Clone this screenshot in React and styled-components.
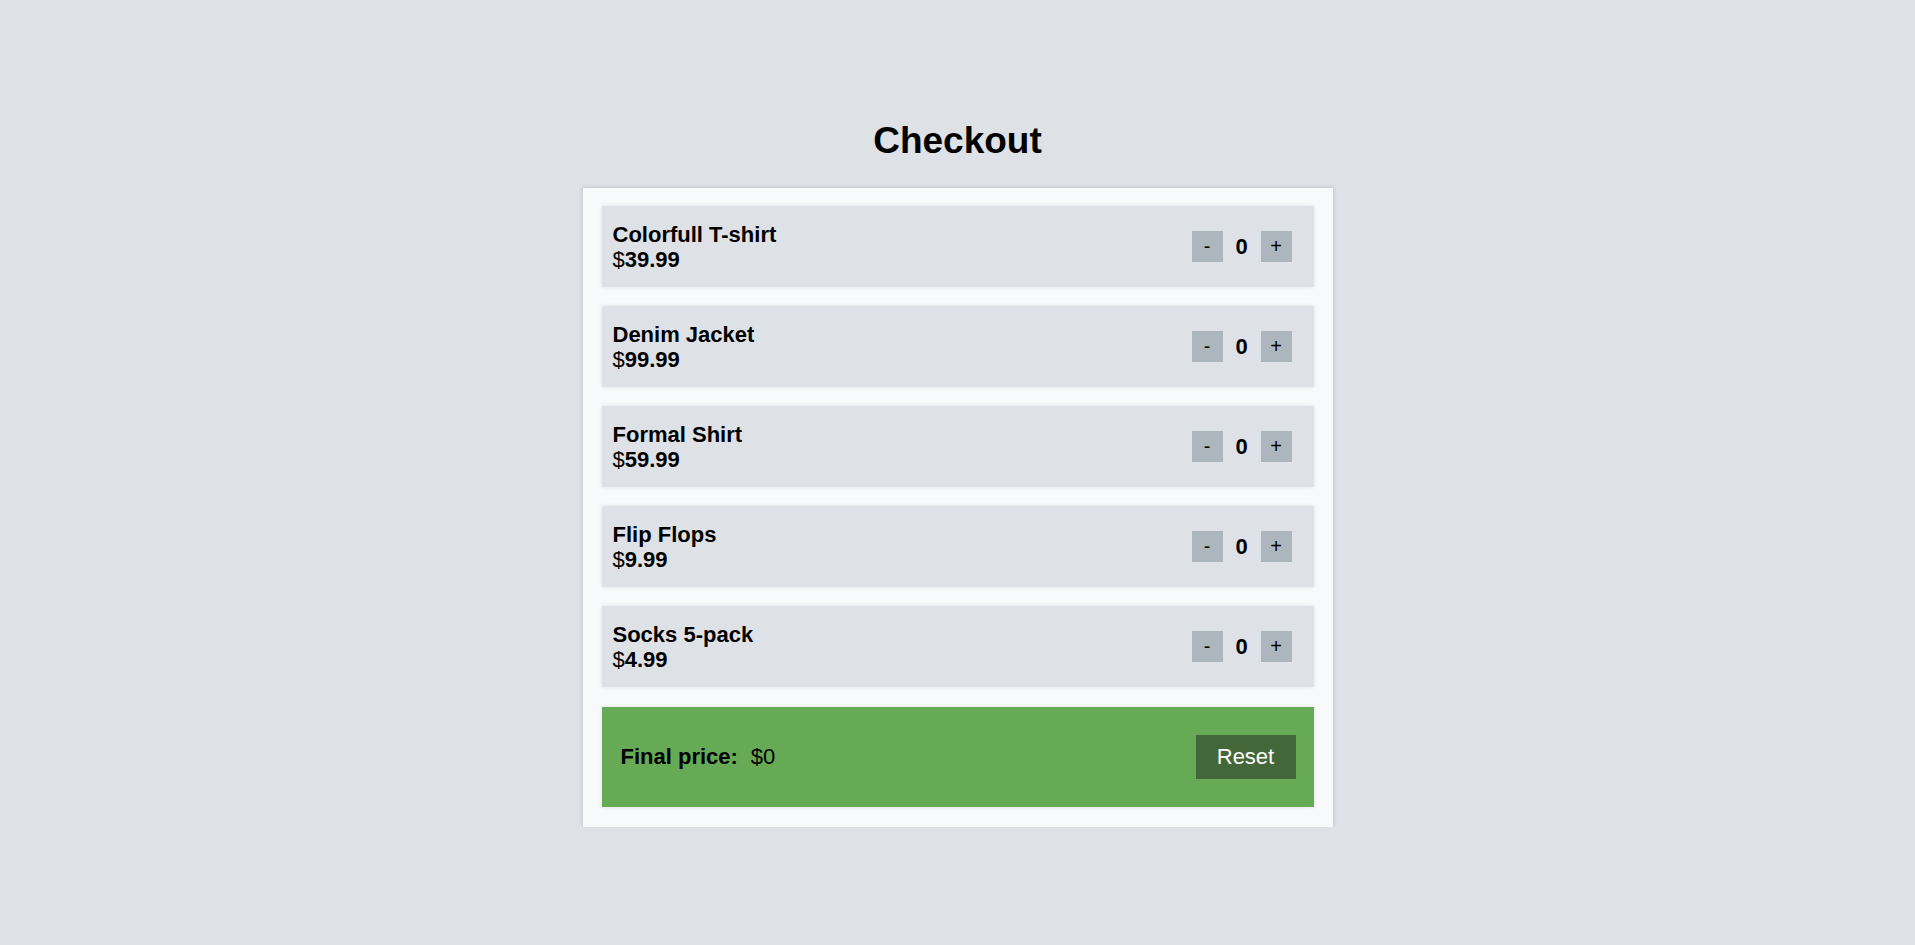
import React, { useState } from "react";
import styled, { createGlobalStyle } from "styled-components";

const GlobalStyle = createGlobalStyle`
  body {
    margin: 0;
    background: #dee2e6;
    font-family: "Liberation Sans", Arial, sans-serif;
    color: #000;
  }
`;

const products = [
  { id: 1, name: "Colorfull T-shirt", price: 39.99 },
  { id: 2, name: "Denim Jacket", price: 99.99 },
  { id: 3, name: "Formal Shirt", price: 59.99 },
  { id: 4, name: "Flip Flops", price: 9.99 },
  { id: 5, name: "Socks 5-pack", price: 4.99 },
];

const Page = styled.div`
  display: flex;
  flex-direction: column;
  align-items: center;
  padding-top: 120px;
`;

const Title = styled.h1`
  margin: 0 0 26px;
  font-size: 37px;
  font-weight: bold;
`;

const Card = styled.div`
  width: 750px;
  box-sizing: border-box;
  padding: 18px 19px 20px;
  background: #f8f9fa;
  box-shadow: 0 0 4px rgba(0, 0, 0, 0.2);
  display: flex;
  flex-direction: column;
  gap: 19px;
`;

const Row = styled.div`
  height: 81px;
  box-sizing: border-box;
  padding: 0 22px 0 11px;
  background: #dee2e6;
  box-shadow: 0 0 4px rgba(0, 0, 0, 0.1);
  display: flex;
  align-items: center;
  justify-content: space-between;
`;

const Info = styled.div`
  font-size: 22px;
  line-height: 25px;
`;

const Name = styled.div`
  font-weight: bold;
`;

const Price = styled.div`
  b {
    font-weight: bold;
  }
`;

const Counter = styled.div`
  display: flex;
  align-items: center;
`;

const StepButton = styled.button`
  width: 31px;
  height: 31px;
  padding: 0;
  border: none;
  background: #adb5bd;
  font-family: inherit;
  font-size: 20px;
  color: #000;
  cursor: pointer;
`;

const Count = styled.span`
  width: 38px;
  text-align: center;
  font-size: 22px;
  font-weight: bold;
`;

const Footer = styled.div`
  height: 100px;
  margin-top: 1px;
  box-sizing: border-box;
  padding: 0 18px 0 19px;
  background: #67aa55;
  box-shadow: 0 0 4px rgba(0, 0, 0, 0.1);
  display: flex;
  align-items: center;
  justify-content: space-between;
  font-size: 22px;
`;

const Total = styled.div`
  display: flex;
  gap: 13px;
`;

const ResetButton = styled.button`
  width: 100px;
  height: 44px;
  border: none;
  background: #436739;
  color: #fff;
  font-family: inherit;
  font-size: 22px;
  cursor: pointer;
`;

const Item = ({ item, qty, onChange }) => (
  <Row>
    <Info>
      <Name>{item.name}</Name>
      <Price>
        $<b>{item.price}</b>
      </Price>
    </Info>
    <Counter>
      <StepButton onClick={() => onChange(Math.max(0, qty - 1))}>-</StepButton>
      <Count>{qty}</Count>
      <StepButton onClick={() => onChange(qty + 1)}>+</StepButton>
    </Counter>
  </Row>
);

const App = () => {
  const [qty, setQty] = useState({});

  const total = products.reduce((sum, p) => sum + p.price * (qty[p.id] || 0), 0);
  const shown = Math.round(total * 100) / 100;

  return (
    <>
      <GlobalStyle />
      <Page>
        <Title>Checkout</Title>
        <Card>
          {products.map((item) => (
            <Item
              key={item.id}
              item={item}
              qty={qty[item.id] || 0}
              onChange={(v) => setQty({ ...qty, [item.id]: v })}
            />
          ))}
          <Footer>
            <Total>
              <b>Final price:</b>
              <span>${shown}</span>
            </Total>
            <ResetButton onClick={() => setQty({})}>Reset</ResetButton>
          </Footer>
        </Card>
      </Page>
    </>
  );
};

export default App;
